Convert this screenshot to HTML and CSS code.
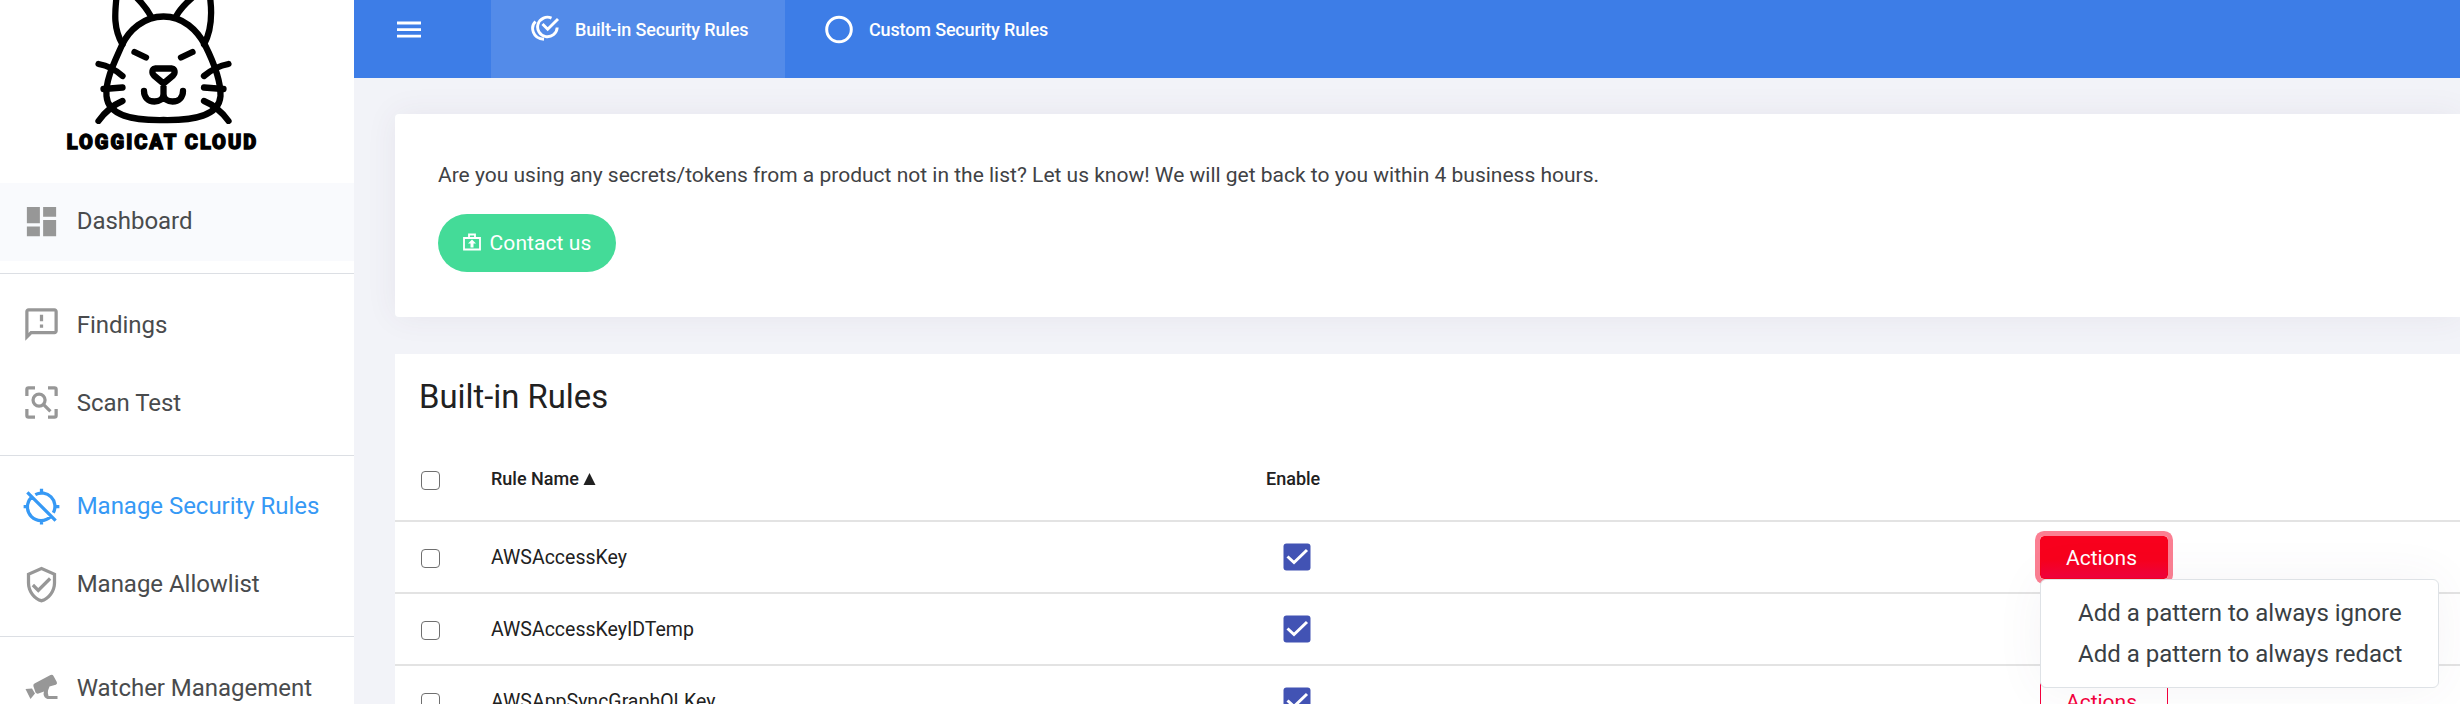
FILE: index.html
```html
<!DOCTYPE html>
<html lang="en">
<head>
<meta charset="utf-8">
<title>Loggicat Cloud</title>
<link rel="stylesheet" href="styles.css">
</head>
<body>
<div class="app">
  <aside class="sidebar">
    <div class="brand">
      <svg class="cat" viewBox="0 0 160 124" fill="none" stroke="#000" stroke-width="6.300" stroke-linecap="round" stroke-linejoin="round">
        <path d="M39.500 44.500C30 28 32 12 33.500 -3M53 -3C59 3 64 9 68 16.500M93 16.500C97 9 103 3 110 -3M127 -3C129 12 129 30 121 44.500"/>
        <path d="M80.500 16.500C61 16.500 46 30 39 45C32 61 22 80 23.500 96C25 116 50 120.500 80.500 120C111 120.500 136 116 137.500 96C138 80 130 61 122 45C114 30 100 16.500 80.500 16.500Z"/>
        <path d="M51.500 52L63 57.500M109.500 52L98 57.500"/>
        <path d="M72 68.500H89C92 69 92.500 73 90 75.500L80.500 83.500L71 75.500C68.500 73 69 69 72 68.500ZM80.500 83.500V94C80.500 99 76 101.500 71.500 101.500C65 101.500 61 97 61 91M80.500 94C80.500 99 85 101.500 89.500 101.500C96 101.500 100 97 100 91"/>
        <path d="M15.500 64C24 65.500 33 70 39.500 76M20.500 89L39.500 87.500M39.500 101C30 105 22 112 15.500 121M145.500 64C137 65.500 128 70 121 76M140.500 89L121 87.500M121 101C131 105 139 112 145.500 121"/>
      </svg>
      <div class="brand-name">LOGGICAT CLOUD</div>
    </div>
    <nav class="menu">
      <a class="item shaded"><svg class="ico" viewBox="0 0 24 24"><path d="M3 13h8V3H3v10zm0 8h8v-6H3v6zm10 0h8V11h-8v10zm0-18v6h8V3h-8z"/></svg>Dashboard</a>
      <hr>
      <a class="item"><svg class="ico" viewBox="0 0 24 24"><path d="M20 2H4c-1.100 0-1.990.9-1.990 2L2 22l4-4h14c1.100 0 2-.9 2-2V4c0-1.100-.9-2-2-2zm0 14H5.170L4 17.170V4h16v12zm-9-4h2v2h-2zm0-6h2v4h-2z"/></svg>Findings</a>
      <a class="item"><svg class="ico" viewBox="0 0 24 24" fill="none" stroke="currentColor" stroke-width="2"><path d="M3 8V4q0-1 1-1h4M16 3h4q1 0 1 1v4M21 16v4q0 1-1 1h-4M8 21H4q-1 0-1-1v-4"/><circle cx="10.500" cy="10.500" r="3.700"/><path d="M13 13l4.500 4.500"/></svg>Scan Test</a>
      <hr>
      <a class="item active"><svg class="ico" viewBox="0 0 24 24" fill="none" stroke="currentColor" stroke-width="2"><path d="M8.200 4.700A8.200 8.200 0 0 1 19.300 15.800M17.600 18.200A8.200 8.200 0 0 1 5.800 6.400M12 1v3M12 20v3M1 12h3M20 12h3M3.300 3.300l17.400 17.400"/></svg>Manage Security Rules</a>
      <a class="item"><svg class="ico" viewBox="0 0 24 24"><path d="M12 1L3 5v6c0 5.550 3.840 10.740 9 12 5.160-1.260 9-6.450 9-12V5l-9-4zm7 10c0 4.520-2.980 8.690-7 9.930-4.020-1.240-7-5.410-7-9.930V6.300l7-3.110 7 3.110V11zm-11.590.59L6 13l4 4 8-8-1.410-1.420L10 14.170z"/></svg>Manage Allowlist</a>
      <hr>
      <a class="item"><svg class="ico" viewBox="0 0 39 39"><path d="M12.500 15.500L28.500 7q2-1 3 1l3.300 6q.8 2-1 2.700L31 17.500l-3.500 1-1.500 4q-.5 2 .5 5.500h9v3H25.500q-3.500-1-4-5l.5-2.500-5.500 2q-2 .5-3-1L11.500 18.500q-.8-2 1-3zM3.500 21l6.500-.5 3 5-4.500 5.500z"/></svg>Watcher Management</a>
    </nav>
  </aside>
  <div class="page">
    <header class="topbar">
      <svg class="burger" viewBox="0 0 24 17"><path d="M0 2h24M0 8.700h24M0 15.200h24" stroke="#fff" stroke-width="2.800"/></svg>
      <a class="tab selected"><svg class="tab-ico" viewBox="0 0 30 30" fill="none" stroke="#fff" stroke-width="2.900"><path d="M21.500 3.100A9.800 9.800 0 1 0 27.200 12.500M5.500 6.500C0 12 2.500 23.500 14 24.300M12.500 9l5.200 5.200L28 4"/></svg>Built-in Security Rules</a>
      <a class="tab"><svg class="tab-ico" viewBox="0 0 30 30" fill="none" stroke="#fff" stroke-width="3"><circle cx="15" cy="14.500" r="12.300"/></svg>Custom Security Rules</a>
    </header>
    <main class="content">
      <section class="card notice">
        <p>Are you using any secrets/tokens from a product not in the list? Let us know! We will get back to you within 4 business hours.</p>
        <a class="contact"><svg viewBox="0 0 18 18" fill="none" stroke="#fff" stroke-width="1.800"><path d="M1 5h16v11.500H1zM6 5V1.500h6V5"/><path d="M9 6.500l4 4h-2.500v4h-3v-4H5z" fill="#fff" stroke="none"/></svg>Contact us</a>
      </section>
      <section class="card rules">
        <h1>Built-in Rules</h1>
        <div class="row head"><span class="box"></span><span class="name">Rule Name <svg class="sort" viewBox="0 0 12 12"><path d="M6 0l6 12H0z"/></svg></span><span class="enable">Enable</span></div>
        <div class="row"><span class="box"></span><span class="name">AWSAccessKey</span><span class="enable"><svg class="check" viewBox="0 0 28 28"><rect x=".5" y=".5" width="27" height="27" rx="3"/><path d="M4.500 13.500l6.500 6L24 7"/></svg></span>
          <div class="actions"><button class="btn open">Actions</button>
            <div class="dropdown"><a>Add a pattern to always ignore</a><a>Add a pattern to always redact</a></div></div></div>
        <div class="row"><span class="box"></span><span class="name">AWSAccessKeyIDTemp</span><span class="enable"><svg class="check" viewBox="0 0 28 28"><rect x=".5" y=".5" width="27" height="27" rx="3"/><path d="M4.500 13.500l6.500 6L24 7"/></svg></span></div>
        <div class="row"><span class="box"></span><span class="name">AWSAppSyncGraphQLKey</span><span class="enable"><svg class="check" viewBox="0 0 28 28"><rect x=".5" y=".5" width="27" height="27" rx="3"/><path d="M4.500 13.500l6.500 6L24 7"/></svg></span>
          <div class="actions"><button class="btn">Actions</button></div></div>
      </section>
    </main>
  </div>
</div>
</body>
</html>
```
FILE: styles.css
```css
* { box-sizing: border-box; }
body { margin: 0; font-family: Roboto, sans-serif; background: #f2f3f8; color: #212529; }
.app { display: flex; height: 704px; overflow: hidden; }
.sidebar { width: 354px; flex: none; background: #fff; overflow: hidden; }
.brand { height: 183px; display: flex; flex-direction: column; align-items: center; padding-right: 29px; }
.cat { width: 160px; height: 124px; flex: none; }
.brand-name { font: 900 20px/30px Roboto, sans-serif; color: #000; white-space: nowrap; margin-top: 3px; letter-spacing: 2px; -webkit-text-stroke: 1.300px #000; }
.item { display: flex; align-items: center; height: 78px; padding: 0 0 2px 22px; gap: 15.700px; font-size: 24px; letter-spacing: -.03px; color: #494b4d; white-space: nowrap; }
.item.shaded { background: #f9fafd; }
.item.active { color: #3699f5; }
.ico { width: 39px; height: 39px; flex: none; fill: #979797; color: #979797; }
.ico[fill="none"] { fill: none; }
.active .ico { color: #3699f5; }
.menu hr { border: 0; height: 1px; background: #dcdfe4; margin: 12px 0 12.500px; }
.page { flex: 1; min-width: 0; }
.topbar { height: 78px; background: #3d7de7; display: flex; color: #fff; }
.burger { width: 24px; height: 17px; margin: 21px 70px 0 43px; flex: none; }
.tab { display: flex; align-items: center; height: 78px; padding: 0 38px 19px 39px; gap: 15px; font-size: 18px; font-weight: 500; letter-spacing: -.15px; white-space: nowrap; }
.tab.selected { background: #538be9; width: 294px; }
.tab-ico { width: 30px; height: 30px; flex: none; }
.content { padding: 36px 0 0 41px; }
.card { background: #fff; }
.notice { height: 203px; border-radius: 4px 0 0 4px; box-shadow: 0 0 32px rgba(82, 63, 105, .07); padding: 44px 43px; }
.notice p { margin: 0; font-size: 21px; line-height: 34px; color: #3f4245; white-space: nowrap; }
.contact { display: flex; width: 178px; height: 58px; margin-top: 22px; border-radius: 29px; background: #44db98; color: #fff; align-items: center; justify-content: center; gap: 9px; font-size: 21px; letter-spacing: .08px; }
.contact svg { width: 18px; height: 18px; margin-bottom: 2px; }
.rules { margin-top: 37px; height: 400px; color: #212121; }
.rules h1 { margin: 0; padding: 21px 0 0 24px; font-size: 32.800px; font-weight: 400; line-height: 44px; height: 82px; }
.row { display: grid; grid-template-columns: 96px 775px 774px 1fr; align-items: center; height: 72px; border-bottom: 2px solid #e3e3e3; font-size: 19.500px; }
.row.head { height: 86px; font-size: 18px; font-weight: 500; }
.box { width: 19px; height: 19px; margin-left: 26px; border: 1px solid #6f6f6f; border-radius: 4px; margin-top: 2px; }
.head .box { margin-top: 4px; }
.sort { width: 13px; height: 12px; fill: #212121; }
.check { width: 28px; height: 28px; display: block; margin-left: 17px; fill: #4253b4; }
.check path { fill: none; stroke: #fff; stroke-width: 3; }
.actions { position: relative; }
.btn { font: 400 21px Roboto, sans-serif; width: 128px; height: 43px; padding: 1px 5px 0 0; border: 1px solid #f5003d; border-radius: 4px; background: #fff; color: #f5003d; display: block; }
.btn.open { background: linear-gradient(#f8001d 55%, #f1003c); color: #fff; border-color: #f8001d; box-shadow: 0 0 0 5px #fb7f92; }
.dropdown { position: absolute; top: 43px; left: 0; width: 399px; height: 109px; border: 1px solid #dee2e6; border-radius: 6px; background: #fff; padding: 13px 37px; box-shadow: 0 0 50px rgba(82, 63, 105, .06); display: flex; flex-direction: column; z-index: 2; font-size: 24px; color: #3a3f44; }
.dropdown a { height: 41px; line-height: 41px; white-space: nowrap; }
```
